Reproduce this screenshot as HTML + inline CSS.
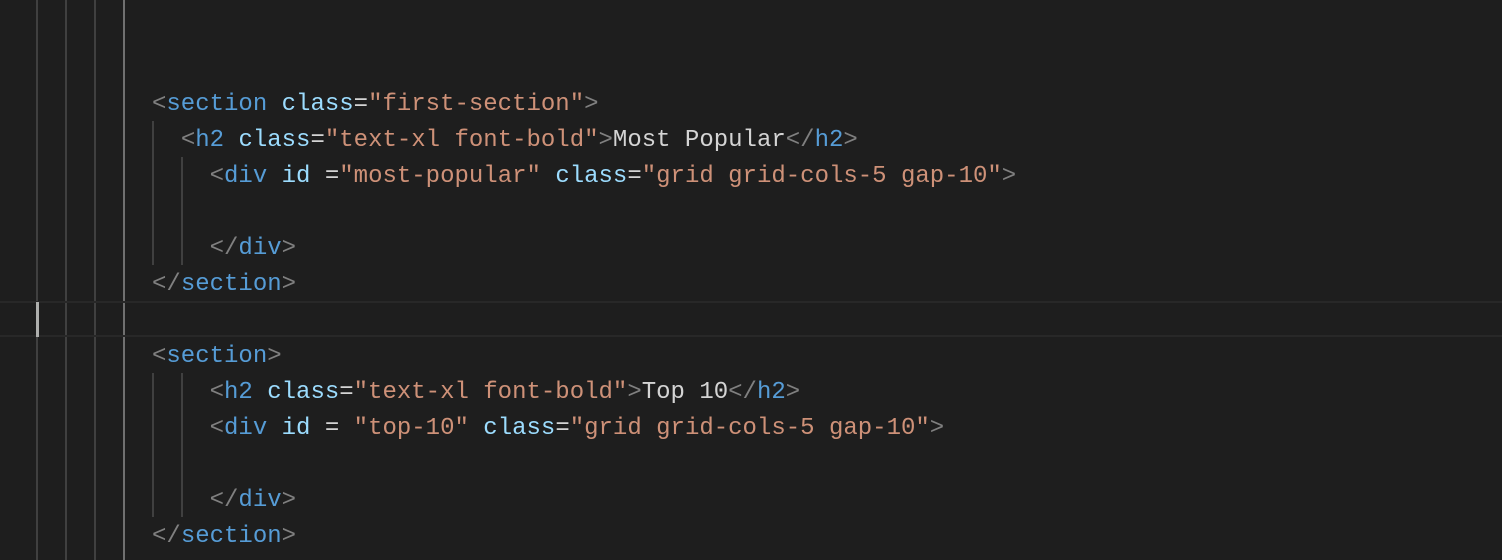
<!DOCTYPE html>
<html><head><style>
html,body{margin:0;padding:0;background:#1e1e1e;width:1502px;height:560px;overflow:hidden;position:relative}
.l{position:absolute;left:152px;height:36px;line-height:36px;font-family:"Liberation Mono",monospace;font-size:24px;white-space:pre;color:#d4d4d4;margin-top:2px}
.p{color:#808080}.t{color:#569cd6}.a{color:#9cdcfe}.s{color:#ce9178}
.g{position:absolute;width:2px;background:#404040}
</style></head><body>
<div class="g" style="left:36px;top:0;height:560px"></div>
<div class="g" style="left:65px;top:0;height:560px"></div>
<div class="g" style="left:94px;top:0;height:560px"></div>
<div class="g" style="left:123px;top:0;height:560px;background:#707070"></div>
<div class="g" style="left:152px;top:121px;height:144px"></div>
<div class="g" style="left:181px;top:157px;height:108px"></div>
<div class="g" style="left:152px;top:373px;height:144px"></div>
<div class="g" style="left:181px;top:373px;height:144px"></div>
<div style="position:absolute;left:0;top:301px;width:1502px;height:32px;border-top:2px solid #282828;border-bottom:2px solid #282828"></div>
<div style="position:absolute;left:36px;top:302px;width:3px;height:35px;background:#aeafad"></div>

<div class="l" style="top:85px"><span class="p">&lt;</span><span class="t">section</span> <span class="a">class</span>=<span class="s">"first-section"</span><span class="p">&gt;</span></div>
<div class="l" style="top:121px">  <span class="p">&lt;</span><span class="t">h2</span> <span class="a">class</span>=<span class="s">"text-xl font-bold"</span><span class="p">&gt;</span>Most Popular<span class="p">&lt;/</span><span class="t">h2</span><span class="p">&gt;</span></div>
<div class="l" style="top:157px">    <span class="p">&lt;</span><span class="t">div</span> <span class="a">id</span> =<span class="s">"most-popular"</span> <span class="a">class</span>=<span class="s">"grid grid-cols-5 gap-10"</span><span class="p">&gt;</span></div>
<div class="l" style="top:229px">    <span class="p">&lt;/</span><span class="t">div</span><span class="p">&gt;</span></div>
<div class="l" style="top:265px"><span class="p">&lt;/</span><span class="t">section</span><span class="p">&gt;</span></div>
<div class="l" style="top:337px"><span class="p">&lt;</span><span class="t">section</span><span class="p">&gt;</span></div>
<div class="l" style="top:373px">    <span class="p">&lt;</span><span class="t">h2</span> <span class="a">class</span>=<span class="s">"text-xl font-bold"</span><span class="p">&gt;</span>Top 10<span class="p">&lt;/</span><span class="t">h2</span><span class="p">&gt;</span></div>
<div class="l" style="top:409px">    <span class="p">&lt;</span><span class="t">div</span> <span class="a">id</span> = <span class="s">"top-10"</span> <span class="a">class</span>=<span class="s">"grid grid-cols-5 gap-10"</span><span class="p">&gt;</span></div>
<div class="l" style="top:481px">    <span class="p">&lt;/</span><span class="t">div</span><span class="p">&gt;</span></div>
<div class="l" style="top:517px"><span class="p">&lt;/</span><span class="t">section</span><span class="p">&gt;</span></div>
</body></html>
